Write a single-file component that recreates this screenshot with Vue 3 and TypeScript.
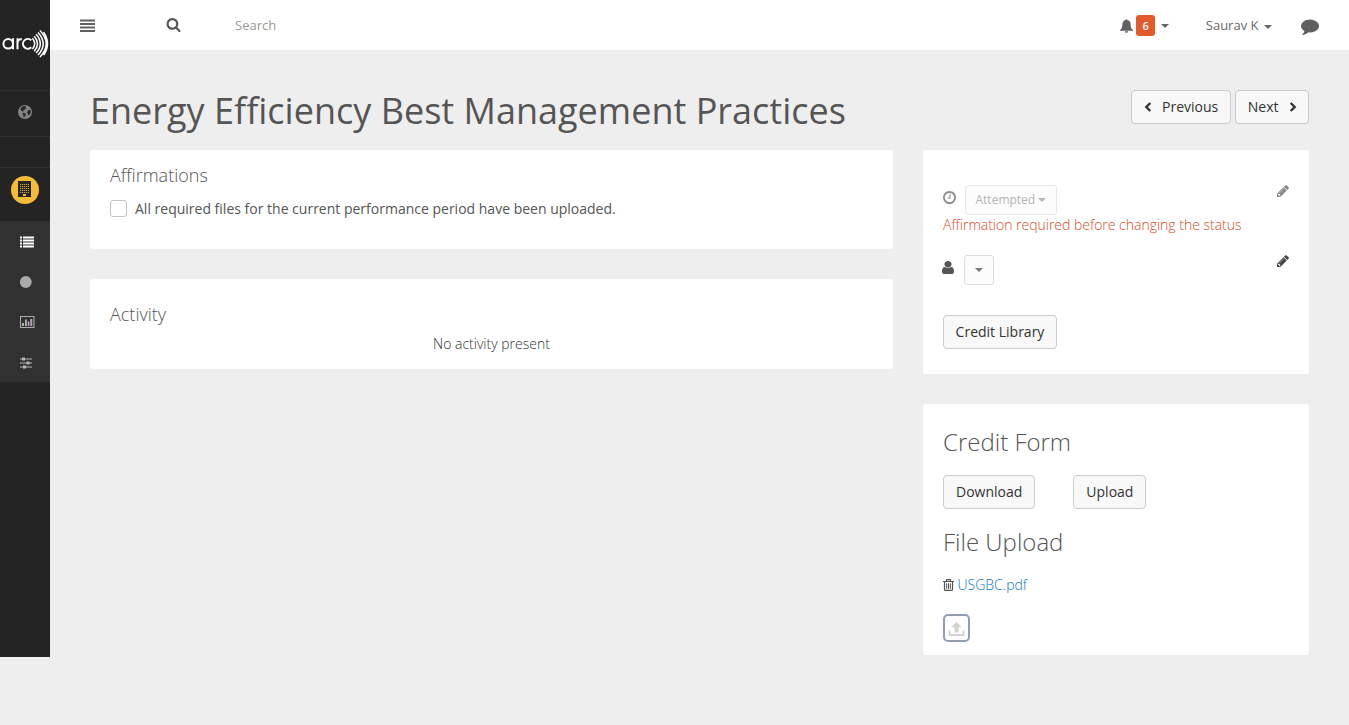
<script setup lang="ts">
import { ref } from 'vue'

const affirmed = ref(false)
const query = ref('')
const fileName = 'USGBC.pdf'
</script>

<template>
  <div class="app">
    <aside class="sidebar">
      <div class="brand">
        <svg width="50" height="30" viewBox="0 0 50 30" fill="none" stroke="#fff">
          <g stroke-width="2">
            <circle cx="8.200" cy="14.800" r="4.800" />
            <path d="M13 9.300v11M17.500 9.300v11M17.500 14.500c0-3.200 1.600-4.600 4.300-4.200M31.300 11.300a4.900 4.900 0 1 0 0 7" />
          </g>
          <g stroke-width="1.500">
            <path d="M32.400 9.300q4.600 5.400 0 10.800M34.200 7.200q6.600 7.500 0 15M36.100 5.300q8.400 9.400 0 18.800M38 3.400q10.400 11.300 0 22.600M40 1.400q12.400 13.300 0 26.600M43.600 3.200q7.800 11.500 0 23" />
          </g>
        </svg>
      </div>
      <div class="side-cell globe">
        <svg width="14" height="14" viewBox="0 0 14 14">
          <circle cx="7" cy="7" r="7" fill="#858585" />
          <path d="M5.300 1.200 8 1 7.400 2.400 8.600 3.200 7.200 4.200 6 4.700 5 5.900 5.600 6.800 4.300 6.600 3.200 5.500 2.400 4.200 3.400 2.200ZM9.900 5.600 12.200 4.600 12.800 7.300 11.600 9.800 10.600 10.400 9.800 8.600 8.900 7.500ZM4.800 7.700 7.100 8.300 8.200 9.500 6.800 10.900 6.300 12.700 5.300 11.700 5.300 10 4.300 8.700Z" fill="#282828" />
        </svg>
      </div>
      <div class="side-cell spacer"></div>
      <div class="side-cell building">
        <span class="disc">
          <svg width="13" height="16" viewBox="0 0 13 16">
            <path d="M0 0h13v16H0z" fill="#252525" />
            <path d="M2 3.500h9M2 5.500h9M2 7.500h9M2 9.500h9M2 11.500h9" stroke="#c9983a" stroke-dasharray="1.300 .7" />
            <path d="M5 13h3v2H5z" fill="#f5bd37" />
          </svg>
        </span>
      </div>
      <nav class="subnav">
        <a class="sub">
          <svg width="14" height="12" viewBox="0 0 14 12" fill="#fff"><path d="M0 .5h2v2H0zM3 .5h11v2H3zM0 3.500h2v2H0zM3 3.500h11v2H3zM0 6.500h2v2H0zM3 6.500h11v2H3zM0 9.500h2v2H0zM3 9.500h11v2H3z" /></svg>
        </a>
        <a class="sub">
          <svg width="14" height="12" viewBox="0 0 14 12"><circle cx="5.800" cy="6" r="5.900" fill="#aaa" /></svg>
        </a>
        <a class="sub chart">
          <svg width="15" height="12" viewBox="0 0 15 12"><path d="M.5 .5h13.500v11H.5z" fill="none" stroke="#aaa" stroke-width="1.100" /><path d="M2 7h2v3H2zM5 3.500h1.900V10H5z" fill="#a9b0ae" /><path d="M7.800 5.500h1.600V10H7.800zM10.300 3h2v7h-2z" fill="#b4a2bd" /></svg>
        </a>
        <a class="sub">
          <svg width="14" height="12" viewBox="0 0 14 12" fill="#b5b5b5"><path d="M0 1.500h12v1H0zM0 5.500h12v1H0zM0 9.500h12v1H0zM2 .5h3v3H2zM6.500 4.500h3v3h-3zM3 8.500h3v3H3z" /></svg>
        </a>
      </nav>
    </aside>

    <div class="page">
      <header class="topbar">
        <svg class="burger" width="15" height="13" viewBox="0 0 15 13" fill="#606060"><path d="M0 .5h15v2H0zM0 4h15v2H0zM0 7.500h15v2H0zM0 11h15v2H0z" /></svg>
        <svg class="lens" width="15" height="15" viewBox="0 0 1792 1792" fill="#555"><path d="M1216 832q0-185-131.500-316.500t-316.500-131.500-316.500 131.500-131.500 316.500 131.500 316.500 316.500 131.500 316.500-131.500 131.500-316.500zm512 832q0 52-38 90t-90 38q-54 0-90-38l-343-342q-179 124-399 124-143 0-273.500-55.500t-225-150-150-225-55.500-273.500 55.500-273.500 150-225 225-150 273.500-55.500 273.500 55.500 225 150 150 225 55.500 273.500q0 220-124 399l343 343q37 37 37 90z" /></svg>
        <input v-model="query" class="search" type="text" placeholder="Search" />
        <div class="alerts">
          <svg width="13" height="14" viewBox="0 0 13 14" fill="#606060"><path d="M5.700 1a.8.8 0 0 1 1.600 0c2.100.4 3.300 2 3.300 4.200 0 2.900.7 4.500 2.400 5.800v.8H0V11c1.700-1.300 2.400-2.900 2.400-5.800C2.400 3 3.600 1.400 5.700 1zM4.800 12.200h3.400a1.700 1.600 0 0 1-3.400 0z" /></svg>
          <span class="badge">6</span>
          <i class="caret"></i>
        </div>
        <div class="account">Saurav K<i class="caret"></i></div>
        <svg class="chat" width="18" height="18" viewBox="0 0 1792 1792" fill="#606060"><path d="M1792 896q0 174-120 321.500t-326 233-450 85.500q-70 0-145-8-198 175-460 242-49 14-114 22-17 2-30.500-9t-17.500-29v-1q-3-4-.5-12t2-10 4.500-9.500l6-9 7-8.500 8-9q7-8 31-34.500t34.500-38 31-39.500 32.500-51 27-59 26-76q-157-89-247.500-220t-90.500-281q0-130 71-248.500t191-204.500 286-136.500 348-50.500q244 0 450 85.500t326 233 120 321.500z" /></svg>
      </header>

      <main class="content">
        <div class="heading">
          <h1>Energy Efficiency Best Management Practices</h1>
          <div class="pager">
            <button class="btn prev"><svg width="8" height="10" viewBox="0 0 8 10"><path d="M6.300 1 2.300 5l4 4" /></svg>Previous</button>
            <button class="btn next">Next<svg width="8" height="10" viewBox="0 0 8 10"><path d="m1.700 1 4 4-4 4" /></svg></button>
          </div>
        </div>

        <div class="columns">
          <div class="left">
            <section class="card affirm">
              <h4>Affirmations</h4>
              <label class="check"><input v-model="affirmed" type="checkbox" /><span>All required files for the current performance period have been uploaded.</span></label>
            </section>
            <section class="card activity">
              <h4>Activity</h4>
              <p>No activity present</p>
            </section>
          </div>

          <div class="right">
            <section class="card status">
              <div class="row attempted">
                <svg class="clock" width="13" height="13" viewBox="128 128 1536 1536" fill="#555"><path d="M1024 544v448q0 14-9 23t-23 9h-320q-14 0-23-9t-9-23v-64q0-14 9-23t23-9h224v-352q0-14 9-23t23-9h64q14 0 23 9t9 23zm416 352q0-148-73-273t-198-198-273-73-273 73-198 198-73 273 73 273 198 198 273 73 273-73 198-198 73-273zm224 0q0 209-103 385.500t-279.500 279.500-385.500 103-385.500-103-279.500-279.500-103-385.500 103-385.500 279.500-279.500 385.500-103 385.500 103 279.500 279.500 103 385.500z" /></svg>
                <button class="btn small" disabled>Attempted<i class="caret"></i></button>
                <svg class="pencil" width="14" height="14" viewBox="0 0 1792 1792" fill="#444"><path d="M491 1536l91-91-235-235-91 91v107h128v128h107zm523-928q0-22-22-22-10 0-17 7l-542 542q-7 7-7 17 0 22 22 22 10 0 17-7l542-542q7-7 7-17zm-54-192l416 416-832 832h-416v-416zm683 96q0 53-37 90l-166 166-416-416 166-165q36-38 90-38 53 0 91 38l235 234q37 39 37 91z" /></svg>
              </div>
              <p class="warning">Affirmation required before changing the status</p>
              <div class="row assignee">
                <svg class="person" width="12" height="13" viewBox="256 128 1280 1536" preserveAspectRatio="none" fill="#555"><path d="M1536 1399q0 109-62.500 187t-150.500 78h-854q-88 0-150.500-78t-62.500-187q0-85 8.500-160.500t31.500-152 58.500-131 94-89 134.500-34.500q131 128 313 128t313-128q76 0 134.500 34.500t94 89 58.500 131 31.500 152 8.500 160.500zm-256-887q0 159-112.500 271.500t-271.500 112.500-271.500-112.500-112.500-271.500 112.500-271.500 271.500-112.500 271.500 112.500 112.500 271.500z" /></svg>
                <button class="btn small pick"><i class="caret"></i></button>
                <svg class="pencil" width="14" height="14" viewBox="0 0 1792 1792" fill="#444"><path d="M491 1536l91-91-235-235-91 91v107h128v128h107zm523-928q0-22-22-22-10 0-17 7l-542 542q-7 7-7 17 0 22 22 22 10 0 17-7l542-542q7-7 7-17zm-54-192l416 416-832 832h-416v-416zm683 96q0 53-37 90l-166 166-416-416 166-165q36-38 90-38 53 0 91 38l235 234q37 39 37 91z" /></svg>
              </div>
              <button class="btn library">Credit Library</button>
            </section>

            <section class="card forms">
              <h3>Credit Form</h3>
              <div class="actions">
                <button class="btn">Download</button>
                <button class="btn">Upload</button>
              </div>
              <h3>File Upload</h3>
              <div class="file">
                <svg width="11" height="12" viewBox="0 0 11 12" fill="none" stroke="#555"><path stroke-width="1.200" d="M0 2.500h11M3.500 2V.6h4V2M1.500 3v7.500q0 .9 1 .9h6q1 0 1-.9V3" /><path d="M3.700 4.300v5.500M5.500 4.300v5.500M7.300 4.300v5.500" /></svg>
                <a>{{ fileName }}</a>
              </div>
              <button class="drop" aria-label="Upload file">
                <svg width="17" height="15" viewBox="0 0 17 15" fill="#d2d2d2"><path d="M8.500 0 13.800 5.300H10.500V10.500H6.500V5.300H3.200zM.5 8.500h2V12h12V8.500h2V14H.5z" /></svg>
              </button>
            </section>
          </div>
        </div>
      </main>
    </div>
  </div>
</template>

<style>
body {
  background: #eee;
}
</style>

<style scoped>
* {
  box-sizing: border-box;
}
.app {
  display: flex;
  align-items: flex-start;
  height: 725px;
  font: 14px/20px "Open Sans", sans-serif;
  color: #555;
}
svg {
  display: block;
  flex: none;
}
h1, h3, h4, p {
  margin: 0;
}
.sidebar {
  width: 50px;
  height: 657px;
  background: #242424;
  flex: none;
}
.brand {
  height: 90px;
  padding-top: 29px;
}
.side-cell {
  display: flex;
  align-items: center;
  justify-content: center;
  border-top: 1px solid #303030;
}
.globe {
  height: 46px;
  padding-bottom: 3px;
}
.spacer {
  height: 31px;
}
.building {
  height: 54px;
  align-items: flex-start;
  padding-top: 8px;
}
.disc {
  display: flex;
  justify-content: center;
  width: 28px;
  height: 28px;
  padding: 5px 1px 0 0;
  border-radius: 50%;
  background: #f5bd37;
}
.subnav {
  height: 161px;
  background: #313131;
  padding-top: 1px;
}
.sub {
  display: flex;
  height: 40.300px;
  padding: 14px 0 0 19.600px;
}
.chart {
  padding-top: 13px;
}
.page {
  flex: 1;
  min-width: 0;
}
.topbar {
  display: flex;
  align-items: center;
  height: 50px;
  padding: 0 30px;
  background: #fff;
  font-size: 13px;
  color: #666;
}
.lens {
  margin: -1px 0 0 71px;
}
.search {
  width: 300px;
  margin-left: 54px;
  padding: 0;
  border: 0;
  outline: 0;
  background: none;
  font: inherit;
}
.search::placeholder {
  color: #999;
  opacity: 1;
}
.alerts {
  display: flex;
  align-items: center;
  margin-left: auto;
  padding-top: 2px;
}
.alerts svg {
  margin-top: -1px;
}
.badge {
  width: 19px;
  height: 21px;
  margin: 0 6px 0 3px;
  border-radius: 3px;
  background: #e05a2b;
  color: #fff;
  font-size: 11px;
  font-weight: 600;
  line-height: 21px;
  text-align: center;
}
.badge {
  margin-top: -1px;
}
.caret {
  display: inline-block;
  width: 8px;
  border: 4px solid transparent;
  border-top-color: currentColor;
  border-bottom: 0;
}
.account {
  display: flex;
  align-items: center;
  gap: 5px;
  margin-left: 36.600px;
}
.account .caret {
  margin-top: 3px;
}
.chat {
  margin: 1px 0 0 29.500px;
}
.content {
  padding: 40px 40px 0;
}
.heading {
  display: flex;
  justify-content: space-between;
  height: 60px;
}
h1 {
  font-size: 36px;
  font-weight: 400;
  line-height: 42px;
  letter-spacing: .010px;
}
.pager {
  display: flex;
  align-items: flex-start;
  gap: 4px;
}
.btn {
  display: flex;
  align-items: center;
  height: 34px;
  padding: 0 12px;
  border: 1px solid #ccc;
  border-radius: 4px;
  background: #f8f8f8;
  color: #333;
  font: inherit;
}
.pager .btn {
  white-space: nowrap;
}
.pager path {
  fill: none;
  stroke: #333;
  stroke-width: 2.400;
}
.prev svg {
  margin-right: 10px;
}
.next svg {
  margin-left: 10px;
}
.pager .next {
  padding: 0 11.500px;
}
.columns {
  display: flex;
  align-items: flex-start;
  gap: 30px;
}
.left {
  width: 803px;
}
.right {
  width: 386px;
}
.left,
.right {
  display: grid;
  gap: 30px;
}
.card {
  border-radius: 3px;
  background: #fff;
  padding: 0 20px;
}
h4 {
  font-size: 18px;
  font-weight: 300;
  line-height: 20px;
}
.affirm {
  height: 99px;
  padding-top: 15px;
}
.check {
  display: flex;
  align-items: flex-start;
  gap: 8px;
  margin-top: 14px;
}
.check input {
  appearance: none;
  width: 17px;
  height: 17px;
  margin: 1px 0 0;
  border: 1px solid #c4c4c4;
  border-radius: 3px;
  background: #fff;
}
.activity {
  height: 90px;
  padding-top: 25px;
}
.activity p {
  margin-top: 10px;
  text-align: center;
  font-weight: 300;
  color: #333;
}
.status {
  height: 224px;
  padding-top: 35px;
}
.row {
  display: flex;
  height: 30px;
}
.clock {
  margin: 6px 0 0 -.500px;
}
.person {
  margin: 6px 1px 0 -1px;
}
.small {
  height: 30px;
  padding: 0 10px;
  border-radius: 3px;
  font-size: 12px;
}
.attempted .small {
  gap: 3px;
  margin-left: 9.500px;
  padding: 0 9.500px;
}
.assignee .small {
  margin-left: 9px;
}
.attempted .clock,
.attempted .pencil {
  opacity: .65;
}
.attempted .small {
  border-color: #e8e8e8;
  background: #fcfcfc;
  color: #b4b4b4;
}
.assignee .pick {
  border-color: #ddd;
  background: #fcfcfc;
  color: #777;
}
.pencil {
  margin: -1px -1px 0 auto;
}
.warning {
  color: #dc4c1c;
  font-weight: 300;
  letter-spacing: -.010px;
}
.assignee {
  margin: 20px 0 30px;
}
.library {
  padding: 0 11.600px;
}
.forms {
  height: 251px;
  padding-top: 24px;
}
h3 {
  font-size: 24px;
  font-weight: 300;
  line-height: 28px;
}
.actions {
  display: flex;
  gap: 38px;
  margin: 19px 0;
}
.file {
  display: flex;
  align-items: center;
  gap: 3.500px;
  height: 20px;
  margin-top: 19px;
  font-weight: 300;
}
.file a {
  color: #0e78be;
}
.drop {
  display: flex;
  align-items: center;
  justify-content: center;
  width: 27px;
  height: 28px;
  margin-top: 19px;
  padding: 3px 0 0;
  border: 2px solid #929daf;
  border-radius: 5px;
  background: #fff;
}
</style>
